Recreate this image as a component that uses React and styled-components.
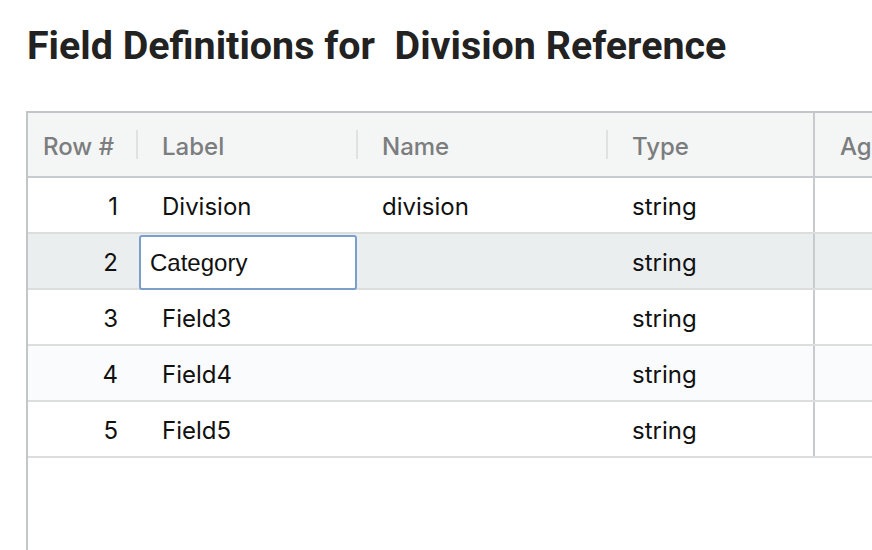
import styled, { createGlobalStyle } from 'styled-components'

const GlobalStyle = createGlobalStyle`
  html, body {
    margin: 0;
    padding: 0;
    background: #fff;
    overflow: hidden;
  }
  body {
    font-family: Inter, "Liberation Sans", sans-serif;
  }
`

const columns = [
  { key: 'row', label: 'Row #', width: 109, align: 'right' },
  { key: 'label', label: 'Label', width: 220 },
  { key: 'name', label: 'Name', width: 250 },
  { key: 'type', label: 'Type', width: 208, pinned: true },
  { key: 'agg', label: 'Aggregation', width: 220 },
]

const rows = [
  { row: 1, label: 'Division', name: 'division', type: 'string' },
  { row: 2, label: 'Category', name: '', type: 'string', editing: true },
  { row: 3, label: 'Field3', name: '', type: 'string' },
  { row: 4, label: 'Field4', name: '', type: 'string', striped: true },
  { row: 5, label: 'Field5', name: '', type: 'string' },
]

export default function App() {
  return (
    <Page>
      <GlobalStyle />
      <Title>Field Definitions for&nbsp; Division Reference</Title>
      <Grid>
        <HeaderRow>
          {columns.map((col, i) => (
            <HeaderCell
              key={col.key}
              $width={col.width}
              $align={col.align}
              $pinned={col.pinned}
              $separator={!col.pinned && i < columns.length - 1}
            >
              {col.label}
            </HeaderCell>
          ))}
        </HeaderRow>
        {rows.map((r) => (
          <Row key={r.row} $selected={r.editing} $striped={r.striped}>
            {columns.map((col) => (
              <Cell key={col.key} $width={col.width} $align={col.align} $pinned={col.pinned}>
                {r.editing && col.key === 'label' ? (
                  <Editor defaultValue={r.label} />
                ) : (
                  r[col.key]
                )}
              </Cell>
            ))}
          </Row>
        ))}
      </Grid>
    </Page>
  )
}

const Page = styled.div`
  display: flex;
  flex-direction: column;
  height: 100vh;
`

const Title = styled.h1`
  margin: 24px 0 0 27px;
  font-family: Roboto, "Liberation Sans", sans-serif;
  font-weight: 700;
  font-size: 39.4px;
  line-height: 44px;
  color: #222;
  white-space: nowrap;
`

const Grid = styled.div`
  flex: 1;
  margin: 43px 0 0 26px;
  border-left: 2px solid #c3c6c9;
  border-top: 2px solid #c3c6c9;
  overflow: hidden;
  font-size: 24px;
`

const HeaderRow = styled.div`
  display: flex;
  height: 63px;
  background: #f4f5f5;
  border-bottom: 2px solid #c8cbcd;
`

const HeaderCell = styled.div`
  position: relative;
  flex: 0 0 ${(p) => p.$width}px;
  box-sizing: border-box;
  display: flex;
  align-items: center;
  justify-content: ${(p) => (p.$align === 'right' ? 'flex-end' : 'flex-start')};
  padding: ${(p) => (p.$align === 'right' ? '3px 23px 0 0' : '3px 0 0 25px')};
  color: #7b7d7e;
  font-weight: 500;
  white-space: nowrap;
  border-right: ${(p) => (p.$pinned ? '2px solid #c8cbcd' : 'none')};

  &::after {
    content: '';
    display: ${(p) => (p.$separator ? 'block' : 'none')};
    position: absolute;
    right: -1px;
    top: 17px;
    bottom: 17px;
    width: 2px;
    background: #dfe1e2;
  }
`

const Row = styled.div`
  display: flex;
  height: 54px;
  border-bottom: 2px solid #dcdddd;
  background: ${(p) => (p.$selected ? '#ebeeef' : p.$striped ? '#fafbfd' : '#fff')};
`

const Cell = styled.div`
  flex: 0 0 ${(p) => p.$width}px;
  box-sizing: border-box;
  display: flex;
  align-items: center;
  justify-content: ${(p) => (p.$align === 'right' ? 'flex-end' : 'flex-start')};
  padding: ${(p) => (p.$align === 'right' ? '3px 19px 0 0' : '3px 0 0 25px')};
  color: #111;
  white-space: nowrap;
  border-right: ${(p) => (p.$pinned ? '2px solid #c8cbcd' : 'none')};
  &:has(input) {
    padding: 1px 0 0 2px;
    align-items: stretch;
  }
`

const Editor = styled.input`
  width: 100%;
  height: 55px;
  box-sizing: border-box;
  margin: 0;
  padding: 0 0 0 9px;
  border: 2px solid #7b9fcb;
  border-radius: 3px;
  background: #fff;
  font-family: "Liberation Sans", Inter, sans-serif;
  font-size: 24px;
  color: #111;
  outline: none;
`
